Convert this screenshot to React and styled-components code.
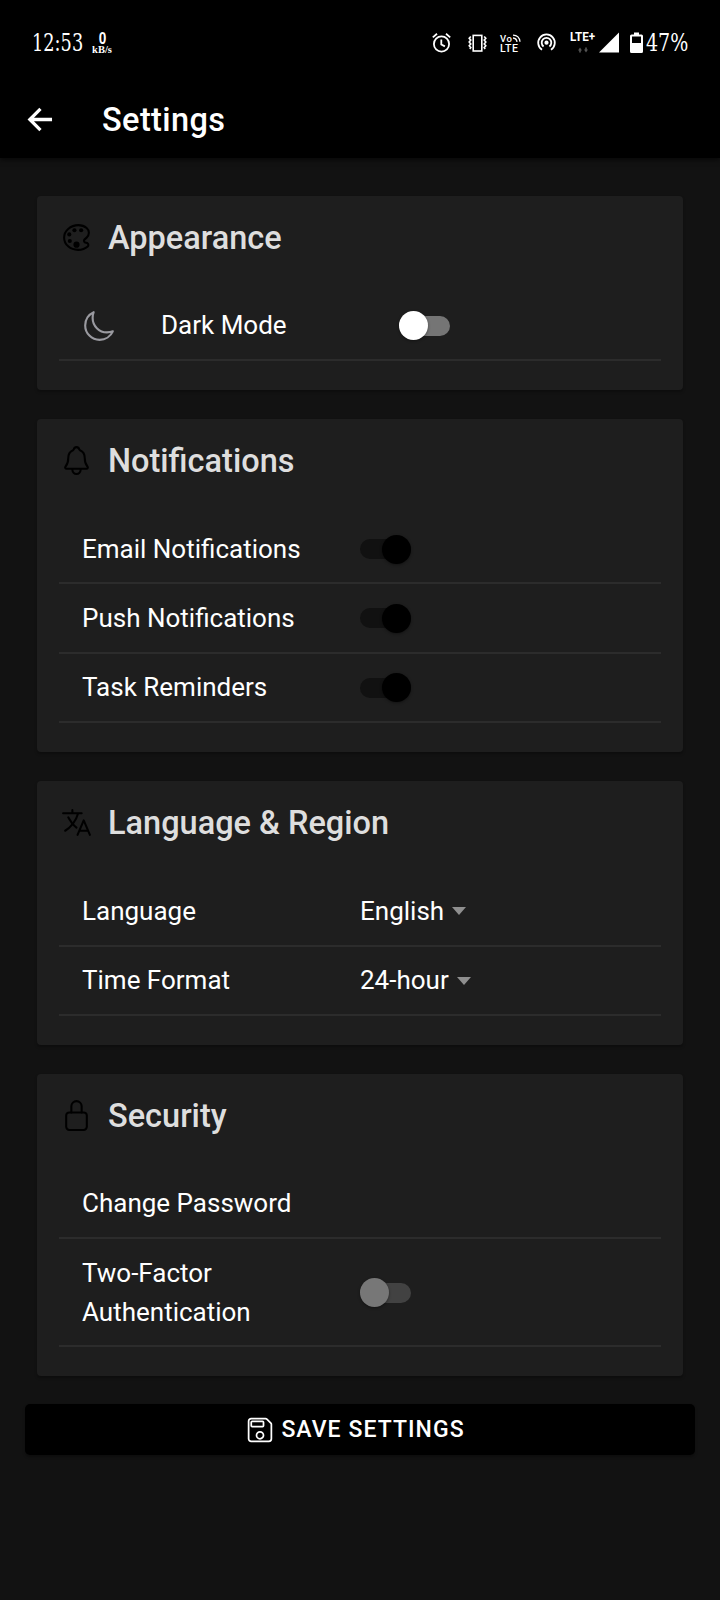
import React from "react";
import styled, { createGlobalStyle } from "styled-components";
import {
  IoColorPaletteOutline,
  IoMoonOutline,
  IoNotificationsOutline,
  IoLanguageOutline,
  IoLockClosedOutline,
  IoSaveOutline,
} from "react-icons/io5";

const GlobalStyle = createGlobalStyle`
  *, *::before, *::after { box-sizing: border-box; }
  body {
    margin: 0;
    background: #121212;
    color: #fff;
    font-family: Roboto, "Liberation Sans", sans-serif;
  }
`;

const Screen = styled.div`
  width: 720px;
  height: 1600px;
  overflow: hidden;
  background: #121212;
`;

const TopArea = styled.header`
  height: 158px;
  background: #000;
  box-shadow: 0 2px 5px rgba(0, 0, 0, 0.6);
`;

const StatusBar = styled.div`
  height: 80px;
  padding: 5px 33px 0 32px;
  display: flex;
  justify-content: space-between;
  align-items: center;
`;

const StatusGroup = styled.div`
  display: flex;
  align-items: center;
`;

const SlabText = styled.span`
  display: block;
  width: ${(p) => p.$width}px;
  height: 24px;
  font: 23.5px/24px "DejaVu Serif Condensed", "DejaVu Serif", serif;
  font-stretch: condensed;
  white-space: nowrap;
  transform: scaleX(${(p) => p.$squeeze});
  transform-origin: left center;
`;

const NetSpeed = styled.div`
  width: 22px;
  margin-left: 9px;
  display: flex;
  flex-direction: column;
  align-items: center;
`;

const SpeedValue = styled.span`
  font: bold 16px/13px "Liberation Sans Narrow", "Liberation Sans", sans-serif;
  transform: scaleX(0.85);
`;

const SpeedUnit = styled.span`
  font: bold 10.5px/9px "Liberation Serif", serif;
`;

const StatusIcon = styled.svg`
  display: block;
  flex: none;
  overflow: visible;
  width: ${(p) => p.$w}px;
  height: 22px;
  margin-right: ${(p) => p.$gap || 0}px;
`;

const AppBar = styled.div`
  height: 78px;
  padding-left: 26px;
  display: flex;
  align-items: center;
`;

const BackArrow = styled.svg`
  width: 27px;
  height: 27px;
`;

const AppTitle = styled.h1`
  margin: 1px 0 0 49px;
  font-size: 32.5px;
  line-height: 40px;
  font-weight: 500;
  letter-spacing: 0.4px;
`;

const Content = styled.main`
  padding: 37.5px 37px 0;
  display: flex;
  flex-direction: column;
  gap: 29px;
`;

const Card = styled.section`
  height: ${(p) => p.$height}px;
  padding: 0 22px;
  border-radius: 4px;
  background: #1e1e1e;
  box-shadow: 0 2px 3px rgba(0, 0, 0, 0.3);
`;

const CardHeader = styled.div`
  height: 96px;
  padding: 22px 0 0 1px;
  display: flex;
  align-items: flex-start;
  gap: 15px;

  svg {
    flex: none;
    width: 33px;
    height: 33px;
    margin-top: 3px;
    color: #000;
  }
`;

const CardTitle = styled.h2`
  margin: 0;
  font-size: 32.5px;
  line-height: 40px;
  font-weight: 500;
  color: #dedede;
`;

const Row = styled.div`
  height: ${(p) => p.$height || 69.4}px;
  padding: 1px 23px 0;
  border-bottom: 2px solid #2c2c2c;
  display: flex;
  align-items: center;

  > svg {
    flex: none;
    width: 34px;
    height: 34px;
    margin-right: 45px;
    color: #9a9aa0;
  }
`;

const Label = styled.span`
  width: ${(p) => p.$width || 278}px;
  padding-right: ${(p) => p.$inset || 0}px;
  font-size: 26px;
  line-height: 39px;
`;

const Track = styled.span`
  display: flex;
  align-items: center;
  justify-content: ${(p) => (p.$on ? "flex-end" : "flex-start")};
  width: 51px;
  height: 20px;
  border-radius: 10px;
  background: ${(p) => p.$track};
`;

const Knob = styled.span`
  width: 29px;
  height: 29px;
  border-radius: 50%;
  background: ${(p) => p.$color};
  box-shadow: 0 1px 3px rgba(0, 0, 0, 0.4);
`;

const Select = styled.span`
  display: flex;
  align-items: center;
  gap: 8px;
  font-size: 26px;
  line-height: 39px;
`;

const Caret = styled.span`
  border: 7px solid transparent;
  border-top: 8px solid #8f8f8f;
  border-bottom: 0;
`;

const SaveButton = styled.button`
  height: 51px;
  margin: -1px -12px 0;
  padding: 0 9px 0 0;
  border: 0;
  border-radius: 5px;
  background: #000;
  color: #fff;
  display: flex;
  align-items: center;
  justify-content: center;
  gap: 7px;
  font: 500 23px/28px Roboto, "Liberation Sans", sans-serif;
  letter-spacing: 1.05px;
  box-shadow: 0 2px 3px rgba(0, 0, 0, 0.3);

  svg {
    width: 28px;
    height: 28px;
  }
`;

function Switch({ on, track, knob }) {
  return (
    <Track $on={on} $track={track}>
      <Knob $color={knob} />
    </Track>
  );
}

function AlarmIcon() {
  return (
    <StatusIcon $w={19} $gap={17} viewBox="0 0 19 22" fill="none" stroke="#fff" strokeWidth="1.8">
      <circle cx="9.5" cy="12" r="7.6" />
      <path d="M9.3 7.5v5l3.6 1.9M.8 5.4 5 1.8M18.2 5.4 14 1.8" />
    </StatusIcon>
  );
}

function VibrateIcon() {
  return (
    <StatusIcon $w={19} $gap={13} viewBox="0 0 19 22" fill="none" stroke="#fff" strokeWidth="1.6">
      <rect x="5.2" y="3.4" width="8.6" height="15.6" />
      <path d="M2.8 4.5 1.2 6.3l1.6 1.8-1.6 1.9 1.6 1.9-1.6 1.9 1.6 1.8-1 1.4M16.2 4.5l1.6 1.8-1.6 1.8 1.6 1.9-1.6 1.9 1.6 1.9-1.6 1.8 1 1.4" />
    </StatusIcon>
  );
}

function VolteIcon() {
  return (
    <StatusIcon $w={21} $gap={16} viewBox="0 0 21 22" fill="#fff">
      <text x="0" y="9.6" fontSize="9.5" fontWeight="500" fontFamily="Roboto, sans-serif" textLength="12">Vo</text>
      <text x="0" y="20" fontSize="10.5" fontWeight="500" fontFamily="Roboto, sans-serif" textLength="18">LTE</text>
      <path d="M13 3.1q6.4.2 7 6.7M13 6q3.6.4 4 3.8" fill="none" stroke="#fff" strokeWidth="1.3" />
    </StatusIcon>
  );
}

function HotspotIcon() {
  return (
    <StatusIcon $w={19} $gap={14} viewBox="0 0 19 22" fill="none" stroke="#fff" strokeWidth="1.8">
      <path d="M5 17.700a8.300 8.300 0 1 1 9 0M6.600 14.500a4.800 4.800 0 1 1 5.800 0" />
      <circle cx="9.5" cy="10.7" r="2.1" fill="#fff" stroke="none" />
    </StatusIcon>
  );
}

function NetworkIcon() {
  return (
    <StatusIcon $w={25} $gap={4} viewBox="0 0 25 22">
      <text x="0" y="9.4" fill="#fff" fontSize="12.5" fontWeight="700" fontFamily="Roboto, sans-serif" textLength="25" lengthAdjust="spacingAndGlyphs">LTE+</text>
      <path d="m10 15.5 2 3h-1.2v2H9.2v-2H8zM16 20.5l-2-3h1.2v-2h1.6v2H18z" fill="#555" />
    </StatusIcon>
  );
}

function SignalIcon() {
  return (
    <StatusIcon $w={20} $gap={11} viewBox="0 0 20 22">
      <path d="M20 .5V20.500H0z" fill="#fff" />
    </StatusIcon>
  );
}

function BatteryIcon() {
  return (
    <StatusIcon $w={13} $gap={3} viewBox="0 0 13 22">
      <path d="M4 .5h5v2h2.5A1.5 1.500 0 0 1 13 4v15.500a1.500 1.500 0 0 1-1.500 1.500h-10A1.500 1.500 0 0 1 0 19.500V4a1.500 1.500 0 0 1 1.500-1.500H4zM2 4.500V11h9V4.500z" fill="#fff" fillRule="evenodd" />
    </StatusIcon>
  );
}

const notifications = ["Email Notifications", "Push Notifications", "Task Reminders"];
const regionOptions = [
  ["Language", "English"],
  ["Time Format", "24-hour"],
];

export default function App() {
  return (
    <Screen>
      <GlobalStyle />
      <TopArea>
        <StatusBar>
          <StatusGroup>
            <SlabText $width={50} $squeeze={0.84}>12:53</SlabText>
            <NetSpeed>
              <SpeedValue>0</SpeedValue>
              <SpeedUnit>kB/s</SpeedUnit>
            </NetSpeed>
          </StatusGroup>
          <StatusGroup>
            <AlarmIcon />
            <VibrateIcon />
            <VolteIcon />
            <HotspotIcon />
            <NetworkIcon />
            <SignalIcon />
            <BatteryIcon />
            <SlabText $width={41} $squeeze={0.9}>47%</SlabText>
          </StatusGroup>
        </StatusBar>
        <AppBar>
          <BackArrow viewBox="0 0 28 28" fill="none" stroke="#fff" strokeWidth="3.4">
            <path d="M27 14H4M15 3 4 14l11 11" />
          </BackArrow>
          <AppTitle>Settings</AppTitle>
        </AppBar>
      </TopArea>
      <Content>
        <Card $height={194.4}>
          <CardHeader>
            <IoColorPaletteOutline />
            <CardTitle>Appearance</CardTitle>
          </CardHeader>
          <Row>
            <IoMoonOutline />
            <Label $width={238}>Dark Mode</Label>
            <Switch track="#757575" knob="#fff" />
          </Row>
        </Card>
        <Card $height={333.4}>
          <CardHeader>
            <IoNotificationsOutline />
            <CardTitle>Notifications</CardTitle>
          </CardHeader>
          {notifications.map((name) => (
            <Row key={name}>
              <Label>{name}</Label>
              <Switch on track="#111" knob="#000" />
            </Row>
          ))}
        </Card>
        <Card $height={263.4}>
          <CardHeader>
            <IoLanguageOutline />
            <CardTitle>Language &amp; Region</CardTitle>
          </CardHeader>
          {regionOptions.map(([name, value]) => (
            <Row key={name}>
              <Label>{name}</Label>
              <Select>
                {value}
                <Caret />
              </Select>
            </Row>
          ))}
        </Card>
        <Card $height={302.4}>
          <CardHeader>
            <IoLockClosedOutline />
            <CardTitle>Security</CardTitle>
          </CardHeader>
          <Row>
            <Label>Change Password</Label>
          </Row>
          <Row $height={108}>
            <Label $inset={60}>Two-Factor Authentication</Label>
            <Switch track="#424242" knob="#777" />
          </Row>
        </Card>
        <SaveButton type="button">
          <IoSaveOutline />
          SAVE SETTINGS
        </SaveButton>
      </Content>
    </Screen>
  );
}
